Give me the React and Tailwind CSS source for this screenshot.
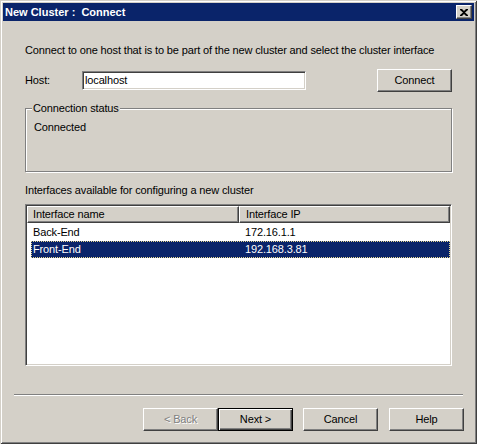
import React from 'react'

const font = { fontFamily: '"Liberation Sans", Arial, sans-serif' }

function Btn({ children, disabled, isDefault }) {
  if (isDefault) {
    return (
      <div className="w-[75px] h-[23px] border border-black bg-[#d4d0c8] flex items-center justify-center text-[11px] text-black shadow-[inset_1px_1px_0_#fff,inset_-1px_-1px_0_#404040,inset_-2px_-2px_0_#808080]">
        {children}
      </div>
    )
  }
  return (
    <div className="w-[75px] h-[23px] border border-t-white border-l-white border-r-[#404040] border-b-[#404040] bg-[#d4d0c8] flex items-center justify-center text-[11px] shadow-[inset_-1px_-1px_0_#808080]">
      <span className={disabled ? 'text-[#808080] [text-shadow:1px_1px_0_#fff]' : 'text-black'}>{children}</span>
    </div>
  )
}

const rows = [
  { name: 'Back-End', ip: '172.16.1.1' },
  { name: 'Front-End', ip: '192.168.3.81', selected: true },
]

export default function App() {
  return (
    <div style={font} className="w-[477px] h-[444px] bg-[#d4d0c8] p-[3px] flex flex-col shadow-[inset_1px_1px_0_#d4d0c8,inset_-1px_-1px_0_#404040,inset_2px_2px_0_#fff,inset_-2px_-2px_0_#808080] text-black leading-[13px]">
      {/* title bar */}
      <div className="h-[18px] bg-[#0a246a] flex items-center justify-between pl-[2px] pr-[2px]">
        <span className="text-white font-bold text-[11px] whitespace-pre">New Cluster :  Connect</span>
        <div className="w-[16px] h-[14px] bg-[#d4d0c8] border border-t-white border-l-white border-r-[#404040] border-b-[#404040] shadow-[inset_-1px_-1px_0_#808080] flex items-center justify-center">
          <svg width="8" height="7" viewBox="0 0 8 7">
            <path d="M0 0h2l2 2 2-2h2v1L5 3.5 8 6v1H6L4 5 2 7H0V6l3-2.5L0 1z" fill="#000" />
          </svg>
        </div>
      </div>

      <div className="flex-1 flex flex-col px-[22px] tracking-[-0.14px]">
        <p className="mt-[23px] text-[11px]">Connect to one host that is to be part of the new cluster and select the cluster interface</p>

        <div className="mt-[12px] flex items-center h-[23px]">
          <span className="w-[57px] text-[11px]">Host:</span>
          <div className="w-[224px] h-[19px] bg-white border border-t-[#808080] border-l-[#808080] border-r-white border-b-white shadow-[inset_1px_1px_0_#404040,inset_-1px_-1px_0_#d4d0c8] flex items-center pl-[2px] text-[11px]">
            localhost
          </div>
          <div className="ml-auto">
            <Btn>Connect</Btn>
          </div>
        </div>

        <div className="relative mt-[16px] h-[64px] border border-[#808080] shadow-[1px_1px_0_#fff,inset_1px_1px_0_#fff] pl-[8px] pt-[12px] text-[11px]">
          <span className="absolute left-[6px] top-[-7px] px-[1px] bg-[#d4d0c8]">Connection status</span>
          Connected
        </div>

        <p className="mt-[12px] text-[11px]">Interfaces available for configuring a new cluster</p>

        <div className="mt-[7px] h-[162px] bg-white border border-t-[#808080] border-l-[#808080] border-r-white border-b-white shadow-[inset_1px_1px_0_#404040,inset_-1px_-1px_0_#d4d0c8] p-[1px] text-[11px]">
          <div className="flex h-[17px]">
            <div className="w-[212px] bg-[#d4d0c8] border border-t-white border-l-white border-r-[#404040] border-b-[#404040] shadow-[inset_-1px_-1px_0_#808080] pl-[5px] flex items-center">Interface name</div>
            <div className="w-[211px] bg-[#d4d0c8] border border-t-white border-l-white border-r-[#404040] border-b-[#404040] shadow-[inset_-1px_-1px_0_#808080] pl-[6px] flex items-center">Interface IP</div>
          </div>
          <div className="pt-[1px]">
            {rows.map((r) => (
              <div key={r.name} className={'flex h-[17px] items-center ml-[4px] ' + (r.selected ? 'bg-[#0a246a] text-white outline outline-1 outline-dotted outline-offset-[-1px] outline-[#e8d890]' : '')}>
                <span className="w-[212px] pl-[2px]">{r.name}</span>
                <span className="pl-[2px]">{r.ip}</span>
              </div>
            ))}
          </div>
        </div>

        <div className="mt-[28px] -mx-[11px] h-[2px] border-t border-t-[#808080] border-b border-b-white" />

        <div className="mt-[12px] -mr-[12px] flex justify-end">
          <Btn disabled>&lt; Back</Btn>
          <Btn isDefault>Next &gt;</Btn>
          <div className="w-[10px]" />
          <Btn>Cancel</Btn>
          <div className="w-[11px]" />
          <Btn>Help</Btn>
        </div>
      </div>
    </div>
  )
}
